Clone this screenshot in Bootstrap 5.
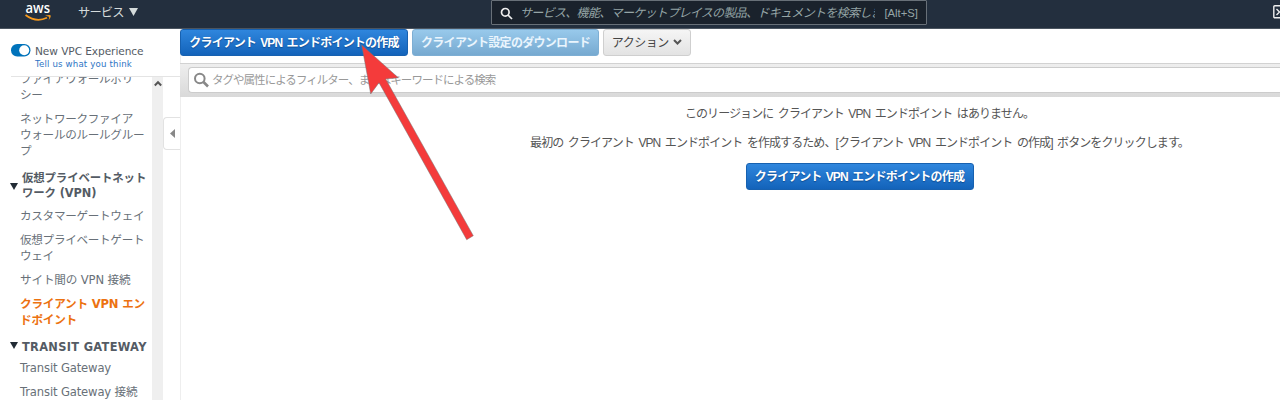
<!DOCTYPE html>
<html lang="ja">
<head>
<meta charset="utf-8">
<title>クライアント VPN エンドポイント</title>
<link href="https://cdn.jsdelivr.net/npm/bootstrap@5.3.0/dist/css/bootstrap.min.css" rel="stylesheet">
<style>
body{font-family:"Liberation Sans","Noto Sans CJK JP",sans-serif;font-size:12px;line-height:16px;color:#555;height:400px;overflow:hidden;background:#fff}
.topbar{height:29px;background:#232f3e;border-bottom:1px solid #4b5560;color:#d5dbdb;padding-left:25px}
.services{font-size:12.3px;letter-spacing:-.9px;margin-left:26px;margin-top:-3px}
.global-search{position:absolute;left:491px;top:0;width:436px;height:25px;background:#1a222c;border:1px solid #687078;border-radius:1px;color:#95a5a6;padding:0 8px}
.global-search em{width:355px;overflow:hidden;white-space:nowrap;font-size:12px;letter-spacing:-.68px;margin-left:7px}
.global-search span{font-size:11.3px}
.side{width:181px;border-right:1px solid #eee;font-family:"DejaVu Sans","Noto Sans CJK JP",sans-serif;color:#687078}
.experience{height:48px;margin-left:11px;border-bottom:1px solid #e4e4e4;padding-top:13px;background:#fff}
.experience b{font-weight:400;font-size:10.6px;line-height:16px;letter-spacing:-.08px;color:#545b64;padding-top:1px}
.experience a{font-size:8.6px;line-height:12px;color:#2d74c4;text-decoration:none;margin-left:24px;display:block;letter-spacing:.17px;margin-top:-1px}
.tree{width:152px;height:323px;overflow:hidden;font-size:11.6px;line-height:16px;white-space:nowrap}
.tree p{margin:0 0 8px 20px;letter-spacing:-.3px}
.tree .latin{letter-spacing:-.15px}
.tree h2{font-size:11.4px;line-height:15px;font-weight:700;color:#545b64;margin:0 0 7px 10px;letter-spacing:-.1px}
.tree .caps{letter-spacing:.32px}
.tree .current{color:#ec7211;font-weight:700;letter-spacing:-.2px}
.scroller{width:11px;background:#efefef;padding-top:3px}
.collapse-tab{width:17px;height:33px;margin-top:40px;border:1px solid #e2e2e2;border-right:0;border-radius:4px 0 0 4px}
.act{height:27px;border-radius:3px;border:1px solid #1761b0;background:linear-gradient(#2f86dd,#1363ba);color:#fff;font-weight:700;font-size:12px;letter-spacing:-.78px;word-spacing:1.5px;line-height:24px;padding:0;text-align:center;white-space:nowrap;text-shadow:0 1px 1px #0d4b92}
.act:hover{color:#fff}
.make{width:228px}
.download{width:187px;background:linear-gradient(#98c9eb,#76a9d0);border-color:#7daed3;text-shadow:none;color:#eaf5fd;letter-spacing:-.7px}
.more{width:88px;background:linear-gradient(#f5f5f5,#e3e3e3);border-color:#cfcfcf;color:#444;text-shadow:none;font-weight:400;letter-spacing:-.45px}
.filter{height:34px;margin-top:7px;border-top:1px solid #d2d2d2;background:linear-gradient(#eee,#d9d9d9);padding:3px 0 0 8px}
.filter-box{height:26px;background:#fff;border:1px solid #ccc;border-right:0;border-radius:4px 0 0 4px;padding-left:5px;color:#999;font-size:11.5px;letter-spacing:-.97px}
/* the console is wider than the window, so the empty state centres past its middle */
.empty{width:1359px;padding-top:9px}
.empty p{margin:0;letter-spacing:-.92px;word-spacing:2.1px}
.pointer{position:absolute;left:350px;top:35px;pointer-events:none}
</style>
<script src="https://cdn.jsdelivr.net/npm/bootstrap@5.3.0/dist/js/bootstrap.bundle.min.js"></script>
</head>
<body class="position-relative">
<header class="topbar d-flex align-items-center">
 <svg width="27" height="21" viewBox="0 0 27 21" style="margin-top:-4px"><text x="0.5" y="11" font-family="Open Sans" font-weight="600" font-size="14.5" textLength="24.5" lengthAdjust="spacingAndGlyphs" fill="#fff">aws</text><path d="M.5 13Q11 21 22 15.8" fill="none" stroke="#f79a1d" stroke-width="1.8"/><path d="M20 13.7Q26 12.3 25.8 14Q25.5 16.5 23.5 18.5Q24.7 15.8 24 14.8Q23 14 20 13.7" fill="#f79a1d"/></svg>
 <span class="services">サービス</span>
 <svg width="9" height="8" style="margin:-4px 0 0 5px"><path d="M0 0H9L4.5 8Z" fill="#d5dbdb"/></svg>
 <div class="global-search d-flex align-items-center">
  <svg width="13" height="13" viewBox="0 0 13 13" fill="none" stroke="#eee" stroke-width="1.7" style="margin-top:2px"><circle cx="5.3" cy="5.3" r="3.8"/><path d="M8 8L12 12"/></svg>
  <em>サービス、機能、マーケットプレイスの製品、ドキュメントを検索します</em>
  <span class="ms-auto text-nowrap">[Alt+S]</span>
 </div>
 <svg class="ms-auto" width="7" height="14" style="margin-top:-4px" fill="none" stroke="#eee" stroke-width="1.4"><rect x=".8" y=".8" width="13" height="12" rx="1"/><path d="M3.5 4L6.5 7L3.5 10"/></svg>
</header>
<div class="d-flex">
 <aside class="side flex-shrink-0">
  <div class="experience">
   <div class="d-flex align-items-center"><svg width="20" height="13"><rect width="19.5" height="12.5" rx="6.2" fill="#0073bb"/><circle cx="13.2" cy="6.2" r="5" fill="#fff"/></svg><b class="ms-1">New VPC Experience</b></div>
   <a href="#">Tell us what you think</a>
  </div>
  <div class="d-flex">
   <nav class="tree">
    <p style="margin-top:-6px">ファイアウォールポリ<br>シー</p>
    <p>ネットワークファイア<br>ウォールのルールグルー<br>プ</p>
    <h2 class="d-flex align-items-center" style="margin-top:12px"><svg width="12" height="7"><path d="M0 0H8L4 7Z" fill="#222b35"/></svg><span>仮想プライベートネット<br>ワーク (VPN)</span></h2>
    <p>カスタマーゲートウェイ</p>
    <p>仮想プライベートゲート<br>ウェイ</p>
    <p class="latin">サイト間の VPN 接続</p>
    <p class="current">クライアント VPN エン<br>ドポイント</p>
    <h2 class="caps d-flex align-items-center" style="margin-top:12px;margin-bottom:5px"><svg width="12" height="8" style="margin-top:-4px"><path d="M0 0H8L4 7Z" fill="#222b35"/></svg><span>TRANSIT GATEWAY</span></h2>
    <p class="latin">Transit Gateway</p>
    <p class="latin">Transit Gateway 接続</p>
   </nav>
   <div class="scroller d-flex justify-content-center"><svg width="8" height="7" fill="none" stroke="#555" stroke-width="2"><path d="M.8 5.5L4 2.2L7.2 5.5"/></svg></div>
   <div class="collapse-tab d-flex align-items-center ps-2 ms-auto"><svg width="5" height="9" style="margin-left:-2px"><path d="M5 0V9L0 4.5Z" fill="#888"/></svg></div>
  </div>
 </aside>
 <main class="flex-grow-1" style="margin-left:-1px">
  <div class="d-flex gap-1">
   <button class="btn act make">クライアント VPN エンドポイントの作成</button>
   <button class="btn act download">クライアント設定のダウンロード</button>
   <button class="btn act more">アクション <svg width="9" height="6" fill="none" stroke="#555" stroke-width="2" style="margin-top:-2px"><path d="M1 1L4.5 4.5L8 1"/></svg></button>
  </div>
  <div class="filter"><div class="filter-box d-flex align-items-center"><svg width="18" height="17" fill="none" stroke="#888" stroke-width="2"><circle cx="5.8" cy="6.5" r="4.8"/><path d="M9.5 10L14 14.5" stroke-width="2.6"/></svg><span>タグや属性によるフィルター、またはキーワードによる検索</span></div></div>
  <section class="empty d-flex flex-column align-items-center">
   <p>このリージョンに クライアント VPN エンドポイント はありません。</p>
   <p style="margin-top:13px">最初の クライアント VPN エンドポイント を作成するため、[クライアント VPN エンドポイント の作成] ボタンをクリックします。</p>
   <button class="btn act make" style="margin-top:12px">クライアント VPN エンドポイントの作成</button>
  </section>
 </main>
</div>
<svg class="pointer" width="130" height="210" viewBox="350 35 130 210"><path d="M361.7 45L398.3 77.7L385.7 79L473.3 235.7L466.7 239.7L379 82.7L370.7 94Z" fill="#f43b3b" stroke="#777" stroke-width=".5"/></svg>
</body>
</html>
